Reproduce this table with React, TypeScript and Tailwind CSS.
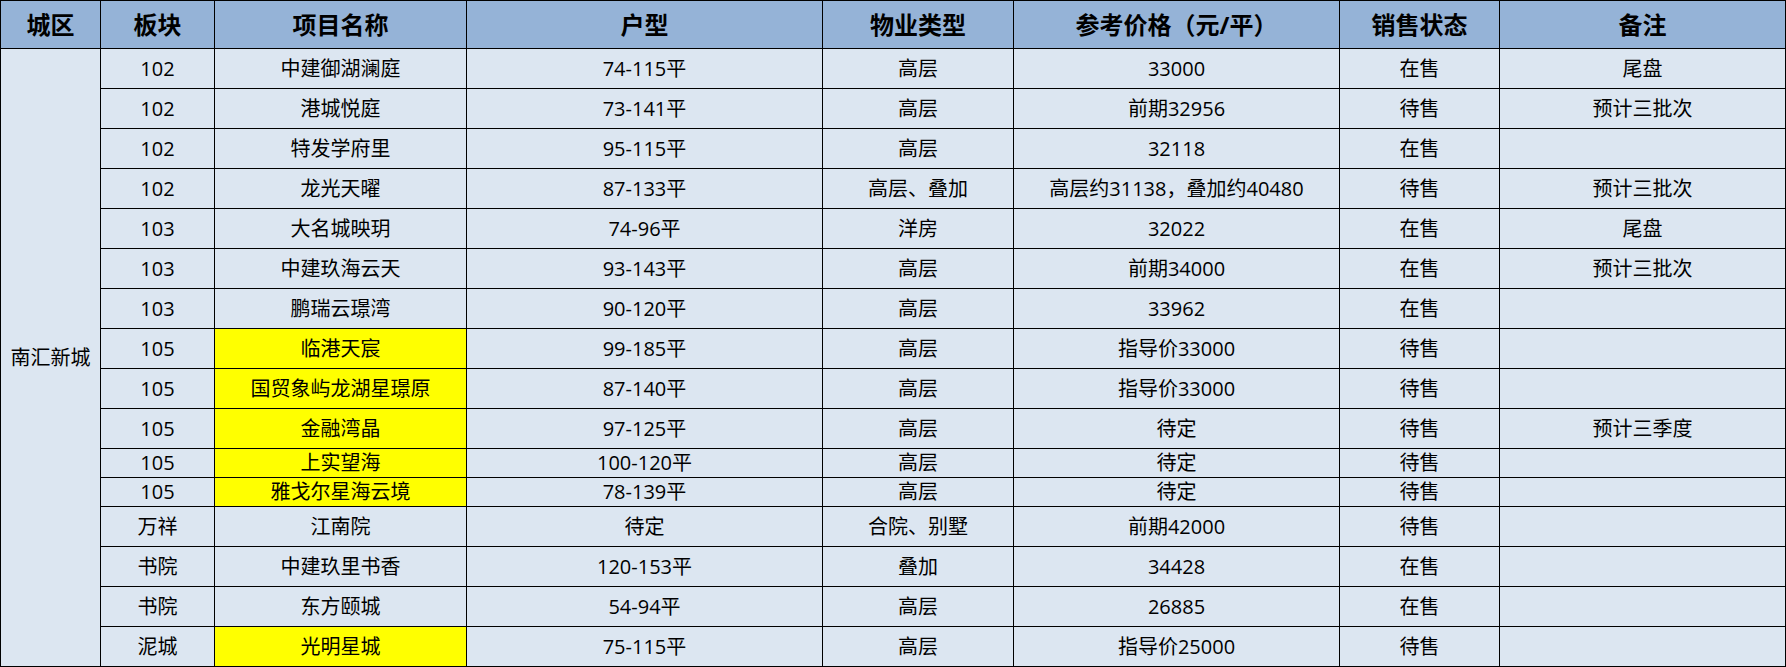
type Row = {
  block: string
  name: string
  size: string
  kind: string
  price: string
  status: string
  note: string
  hl?: boolean
  short?: boolean
}

const rows: Row[] = [
  { block: "102", name: "中建御湖澜庭", size: "74-115平", kind: "高层", price: "33000", status: "在售", note: "尾盘" },
  { block: "102", name: "港城悦庭", size: "73-141平", kind: "高层", price: "前期32956", status: "待售", note: "预计三批次" },
  { block: "102", name: "特发学府里", size: "95-115平", kind: "高层", price: "32118", status: "在售", note: "" },
  { block: "102", name: "龙光天曜", size: "87-133平", kind: "高层、叠加", price: "高层约31138，叠加约40480", status: "待售", note: "预计三批次" },
  { block: "103", name: "大名城映玥", size: "74-96平", kind: "洋房", price: "32022", status: "在售", note: "尾盘" },
  { block: "103", name: "中建玖海云天", size: "93-143平", kind: "高层", price: "前期34000", status: "在售", note: "预计三批次" },
  { block: "103", name: "鹏瑞云璟湾", size: "90-120平", kind: "高层", price: "33962", status: "在售", note: "" },
  { block: "105", name: "临港天宸", size: "99-185平", kind: "高层", price: "指导价33000", status: "待售", note: "", hl: true },
  { block: "105", name: "国贸象屿龙湖星璟原", size: "87-140平", kind: "高层", price: "指导价33000", status: "待售", note: "", hl: true },
  { block: "105", name: "金融湾晶", size: "97-125平", kind: "高层", price: "待定", status: "待售", note: "预计三季度", hl: true },
  { block: "105", name: "上实望海", size: "100-120平", kind: "高层", price: "待定", status: "待售", note: "", hl: true, short: true },
  { block: "105", name: "雅戈尔星海云境", size: "78-139平", kind: "高层", price: "待定", status: "待售", note: "", hl: true, short: true },
  { block: "万祥", name: "江南院", size: "待定", kind: "合院、别墅", price: "前期42000", status: "待售", note: "" },
  { block: "书院", name: "中建玖里书香", size: "120-153平", kind: "叠加", price: "34428", status: "在售", note: "" },
  { block: "书院", name: "东方颐城", size: "54-94平", kind: "高层", price: "26885", status: "在售", note: "" },
  { block: "泥城", name: "光明星城", size: "75-115平", kind: "高层", price: "指导价25000", status: "待售", note: "", hl: true },
]

const headers = ["城区", "板块", "项目名称", "户型", "物业类型", "参考价格（元/平）", "销售状态", "备注"]
const widths = [100, 114, 252, 356, 191, 326, 160, 286]

export default function App() {
  return (
    <div className="w-[1786px] h-[667px] bg-white overflow-hidden font-['Open_Sans','Noto_Sans_CJK_SC',sans-serif] text-black">
      <table className="table-fixed border-collapse w-[1786px]">
        <colgroup>
          {widths.map((w, i) => (
            <col key={i} style={{ width: w }} />
          ))}
        </colgroup>
        <thead>
          {/* Header */}
          <tr className="h-[48px] bg-[#95b3d7]">
            {headers.map((h) => (
              <th key={h} className="border border-black p-0 text-[24px] font-bold text-center leading-none">
                {h}
              </th>
            ))}
          </tr>
        </thead>
        <tbody className="bg-[#dce6f1] text-[20px] leading-none">
          {rows.map((r, i) => (
            <tr key={i} className={r.short ? "h-[29px]" : "h-[40px]"}>
              {i === 0 && (
                <td rowSpan={rows.length} className="border border-black p-0 text-center">
                  南汇新城
                </td>
              )}
              <td className="border border-black p-0 text-center">{r.block}</td>
              <td className={`border border-black p-0 text-center ${r.hl ? "bg-[#ffff00]" : ""}`}>{r.name}</td>
              <td className="border border-black p-0 text-center">{r.size}</td>
              <td className="border border-black p-0 text-center">{r.kind}</td>
              <td className="border border-black p-0 text-center">{r.price}</td>
              <td className="border border-black p-0 text-center">{r.status}</td>
              <td className="border border-black p-0 text-center">{r.note}</td>
            </tr>
          ))}
        </tbody>
      </table>
    </div>
  )
}
